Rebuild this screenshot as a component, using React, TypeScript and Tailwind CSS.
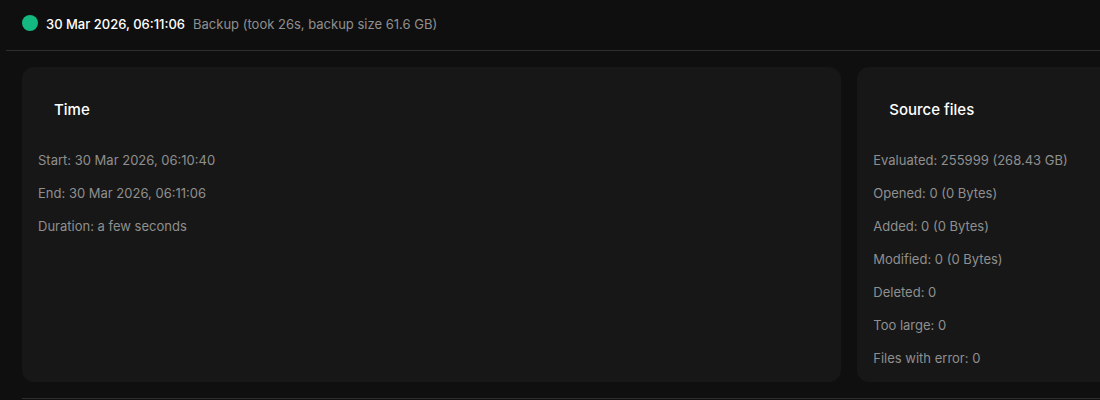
type Panel = { title: string; rows: [string, string][] };

const panels: Panel[] = [
  {
    title: "Time",
    rows: [
      ["Start", "30 Mar 2026, 06:10:40"],
      ["End", "30 Mar 2026, 06:11:06"],
      ["Duration", "a few seconds"],
    ],
  },
  {
    title: "Source files",
    rows: [
      ["Evaluated", "255999 (268.43 GB)"],
      ["Opened", "0 (0 Bytes)"],
      ["Added", "0 (0 Bytes)"],
      ["Modified", "0 (0 Bytes)"],
      ["Deleted", "0"],
      ["Too large", "0"],
      ["Files with error", "0"],
    ],
  },
];

function PanelCard({ title, rows }: Panel) {
  return (
    <section className="shrink-0 basis-[76%] rounded-xl bg-[#171717] px-4 pt-8 pb-[13px]">
      <h2 className="px-4 text-[15px] leading-[22px] font-medium text-white">{title}</h2>
      <ul className="mt-[29px] flex flex-col gap-3">
        {rows.map(([label, value]) => (
          <li key={label} className="leading-[21px]">
            {label}: {value}
          </li>
        ))}
      </ul>
    </section>
  );
}

export default function App() {
  return (
    <main className="min-h-screen overflow-hidden bg-[#0f0f0f] font-['Inter',sans-serif] text-[13px] text-[#8f8f8f]">
      <header className="ml-1.5 flex h-[51px] items-start border-b border-[#2e2e2e] pt-[15px] pl-4">
        <span className="mr-2 size-4 rounded-full bg-[#14b881]" />
        <h1 className="mr-2 leading-[18px] font-medium text-white">30 Mar 2026, 06:11:06</h1>
        <p className="leading-[18px]">Backup (took 26s, backup size 61.6 GB)</p>
      </header>
      <div className="ml-[22px] border-b border-[#2e2e2e] py-4">
        <div className="flex gap-4">
          {panels.map((panel) => (
            <PanelCard key={panel.title} {...panel} />
          ))}
        </div>
      </div>
    </main>
  );
}
